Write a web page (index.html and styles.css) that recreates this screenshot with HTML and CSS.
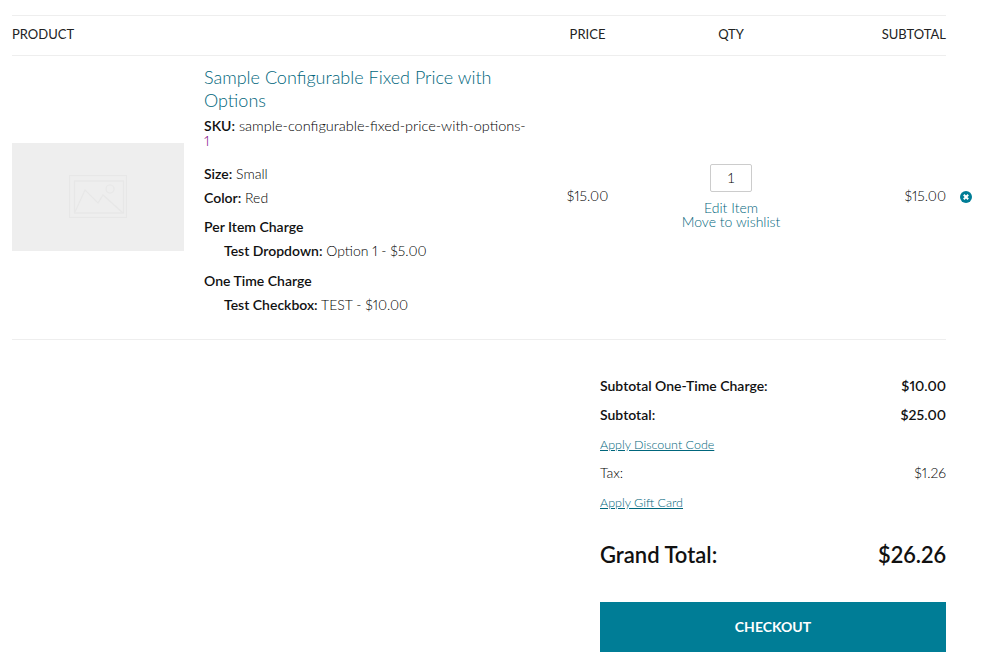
FILE: index.html
```html
<!DOCTYPE html>
<html lang="en">
<head>
    <meta charset="UTF-8">
    <meta name="viewport" content="width=device-width, initial-scale=1.0">
    <title>Shopping Cart</title>
    <link rel="stylesheet" href="styles.css">
</head>
<body>
    <table class="cart-table">
        <colgroup>
            <col class="col-image">
            <col class="col-details">
            <col class="col-price">
            <col class="col-qty">
            <col class="col-subtotal">
            <col class="col-remove">
        </colgroup>
        <thead>
            <tr>
                <th colspan="2">PRODUCT</th>
                <th class="center">PRICE</th>
                <th class="center">QTY</th>
                <th class="right">SUBTOTAL</th>
                <th class="no-border"></th>
            </tr>
        </thead>
        <tbody>
            <tr>
                <td class="image-cell">
                    <div class="placeholder">
                        <svg width="58" height="43" viewBox="0 0 58 43" fill="none" stroke="#e7e7e7" stroke-width="1.2">
                            <rect x="0.5" y="0.5" width="57" height="42"/>
                            <rect x="5.5" y="6" width="49" height="32"/>
                            <path d="M6 37 L16 15 L29 28 L34 20 L54 38"/>
                            <circle cx="41" cy="14" r="4"/>
                        </svg>
                    </div>
                </td>
                <td class="details">
                    <a class="product-name" href="#">Sample Configurable Fixed Price with Options</a>
                    <p class="sku"><b>SKU:</b> sample-configurable-fixed-price-with-options-<span class="sku-end">1</span></p>
                    <p class="attr first"><b>Size:</b> Small</p>
                    <p class="attr"><b>Color:</b> Red</p>
                    <p class="attr group"><b>Per Item Charge</b></p>
                    <p class="attr indent"><b>Test Dropdown:</b> Option 1 - $5.00</p>
                    <p class="attr group"><b>One Time Charge</b></p>
                    <p class="attr indent"><b>Test Checkbox:</b> TEST - $10.00</p>
                </td>
                <td class="center price-cell">$15.00</td>
                <td class="center qty-cell">
                    <input class="qty-input" type="text" value="1">
                    <a class="item-link" href="#">Edit Item</a>
                    <a class="item-link" href="#">Move to wishlist</a>
                </td>
                <td class="right subtotal-cell">$15.00</td>
                <td class="no-border remove-cell">
                    <svg class="remove-icon" width="12" height="12" viewBox="0 0 12 12">
                        <circle cx="6" cy="6" r="6" fill="#007d96"/>
                        <path d="M3.8 3.8 L8.2 8.2 M8.2 3.8 L3.8 8.2" stroke="#fff" stroke-width="2"/>
                    </svg>
                </td>
            </tr>
        </tbody>
    </table>

    <div class="summary">
        <div class="summary-row strong"><span>Subtotal One-Time Charge:</span><span>$10.00</span></div>
        <div class="summary-row strong"><span>Subtotal:</span><span>$25.00</span></div>
        <div class="summary-row small"><a href="#">Apply Discount Code</a></div>
        <div class="summary-row"><span>Tax:</span><span>$1.26</span></div>
        <div class="summary-row small"><a href="#">Apply Gift Card</a></div>
        <div class="summary-row grand"><span>Grand Total:</span><span>$26.26</span></div>
        <button class="checkout-btn" type="button">CHECKOUT</button>
    </div>
</body>
</html>
```

FILE: styles.css
```css
body {
    font-family: Lato, "Open Sans", sans-serif;
    font-size: 14px;
    font-weight: 300;
    font-variant-numeric: proportional-nums;
    color: #000;
    background-color: #fff;
    margin: 0;
    padding: 15px 0 15px 12px;
}
a {
    color: #00667c;
    text-decoration: none;
}
b {
    font-size: 14px;
    font-weight: 600;
    color: #111;
}
.cart-table {
    border-collapse: collapse;
    table-layout: fixed;
    width: 976px;
}
.col-image { width: 192px; }
.col-details { width: 326px; }
.col-price { width: 115px; }
.col-qty { width: 172px; }
.col-subtotal { width: 129px; }
.col-remove { width: 42px; }
th, td {
    border-top: 1px solid #eee;
    border-bottom: 1px solid #eee;
    padding: 0;
}
th {
    height: 35px;
    padding-bottom: 4px;
    font-size: 13px;
    font-weight: 400;
    text-align: left;
    color: #222;
}
th.center, td.center { text-align: center; }
th.right, td.right { text-align: right; }
th.no-border, td.no-border {
    border: none;
}
.image-cell {
    padding-bottom: 2px;
}
.price-cell {
    padding-bottom: 4px;
}
.qty-cell {
    padding-bottom: 3px;
}
.subtotal-cell {
    padding-bottom: 5px;
}
.placeholder {
    width: 172px;
    height: 108px;
    background-color: #eee;
    display: flex;
    align-items: center;
    justify-content: center;
}
.details {
    padding: 10px 0 26px;
}
.product-name {
    display: block;
    font-size: 18px;
    line-height: 23px;
}
.sku {
    margin: 6px 0 0;
    font-size: 14.5px;
    line-height: 15px;
}
.sku-end {
    color: #800080;
}
.attr {
    margin: 7px 0 0;
    line-height: 17px;
}
.attr.first {
    margin-top: 17px;
}
.attr.group {
    margin-top: 12px;
}
.attr.group ~ .attr.group {
    margin-top: 13px;
}
.attr.indent {
    padding-left: 20px;
}
.qty-input {
    display: block;
    width: 42px;
    height: 28px;
    margin: 0 auto 9px;
    padding: 0;
    box-sizing: border-box;
    border: 1px solid #ccc;
    border-radius: 2px;
    font-family: inherit;
    font-size: 14px;
    font-weight: 300;
    color: #000;
    text-align: center;
}
.item-link {
    display: block;
    line-height: 14px;
}
.remove-cell {
    padding: 0 0 2px 14px;
}
.remove-icon {
    display: block;
}
.summary {
    width: 346px;
    margin: 31px 0 0 588px;
}
.summary-row {
    display: flex;
    justify-content: space-between;
    align-items: center;
    box-sizing: border-box;
    height: 29px;
}
.summary-row.strong {
    font-weight: 600;
    color: #111;
}
.summary-row.small {
    padding-top: 2px;
    font-size: 12.5px;
}
.summary-row.small a {
    text-decoration: underline;
}
.summary-row.grand {
    margin-top: 24px;
    font-size: 22px;
    font-weight: 600;
    color: #111;
}
.checkout-btn {
    display: block;
    width: 100%;
    height: 50px;
    margin-top: 33px;
    padding: 0 0 2px;
    border: none;
    background-color: #007d96;
    color: #fff;
    font-family: inherit;
    font-size: 14px;
    font-weight: 700;
    cursor: pointer;
}
```
